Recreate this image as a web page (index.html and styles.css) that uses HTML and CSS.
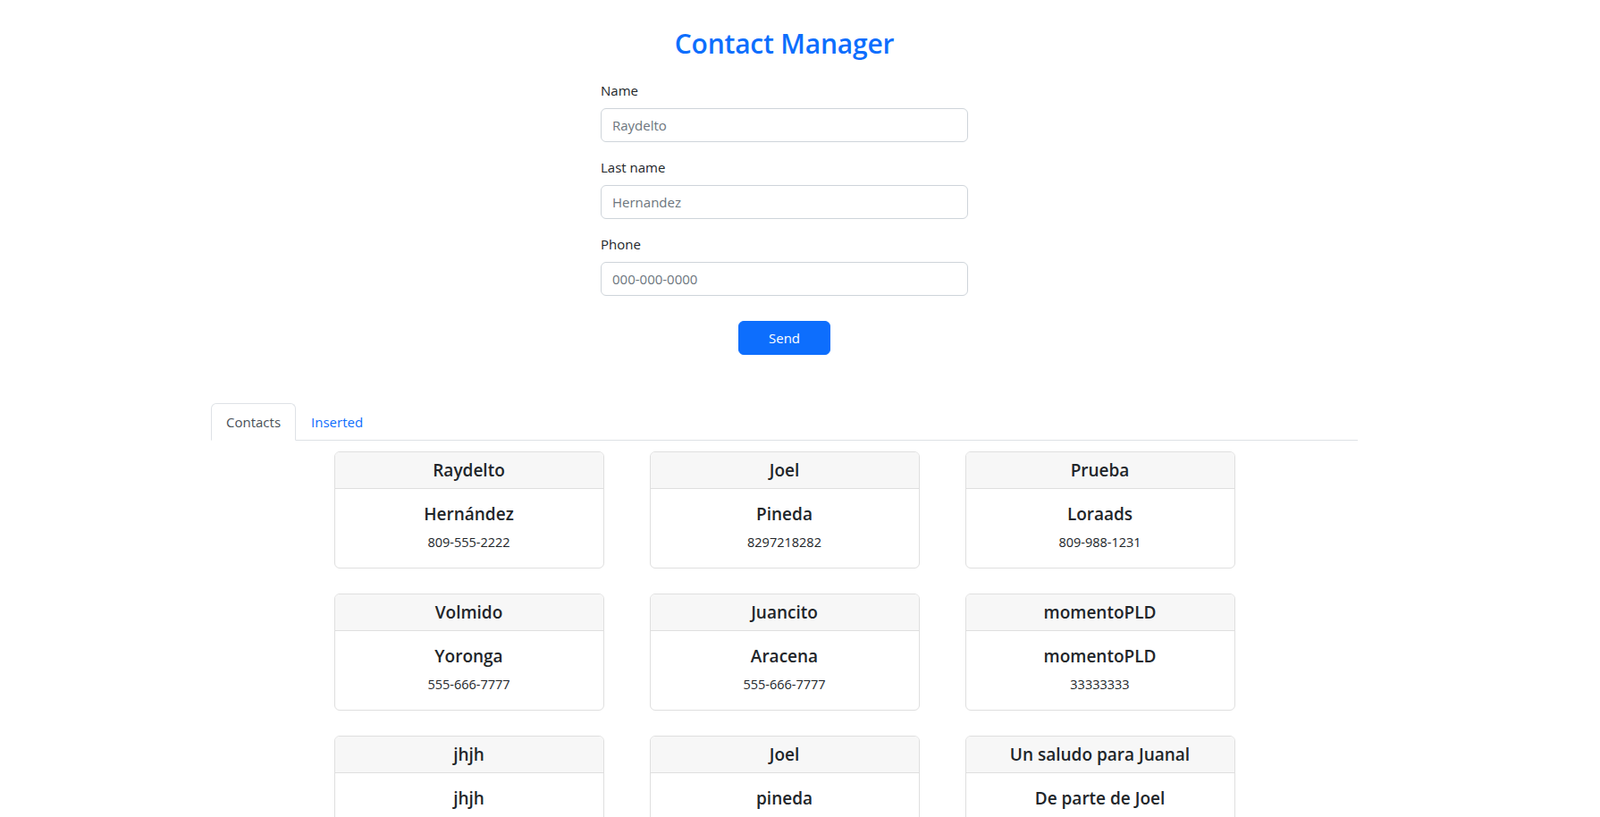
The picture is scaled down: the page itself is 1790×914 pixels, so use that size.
FILE: index.html
```html
<!DOCTYPE html>
<html lang="en">
<head>
<meta charset="utf-8">
<title>Contact Manager</title>
<link rel="stylesheet" href="styles.css">
</head>
<body>
<div class="page">
  <h2 class="title">Contact Manager</h2>
  <form class="form">
    <div class="field">
      <label class="label" for="name">Name</label>
      <input class="input" id="name" type="text" placeholder="Raydelto">
    </div>
    <div class="field">
      <label class="label" for="last">Last name</label>
      <input class="input" id="last" type="text" placeholder="Hernandez">
    </div>
    <div class="field">
      <label class="label" for="phone">Phone</label>
      <input class="input" id="phone" type="text" placeholder="000-000-0000">
    </div>
    <div class="actions">
      <button class="btn" type="button">Send</button>
    </div>
  </form>

  <div class="tabs-wrap">
    <ul class="tabs">
      <li><a class="tab active">Contacts</a></li>
      <li><a class="tab">Inserted</a></li>
    </ul>
  </div>

  <div class="cards">
    <div class="card"><div class="card-header">Raydelto</div><div class="card-body"><div class="last">Hernández</div><div class="phone">809-555-2222</div></div></div>
    <div class="card"><div class="card-header">Joel</div><div class="card-body"><div class="last">Pineda</div><div class="phone">8297218282</div></div></div>
    <div class="card"><div class="card-header">Prueba</div><div class="card-body"><div class="last">Loraads</div><div class="phone">809-988-1231</div></div></div>
    <div class="card"><div class="card-header">Volmido</div><div class="card-body"><div class="last">Yoronga</div><div class="phone">555-666-7777</div></div></div>
    <div class="card"><div class="card-header">Juancito</div><div class="card-body"><div class="last">Aracena</div><div class="phone">555-666-7777</div></div></div>
    <div class="card"><div class="card-header">momentoPLD</div><div class="card-body"><div class="last">momentoPLD</div><div class="phone">33333333</div></div></div>
    <div class="card"><div class="card-header">jhjh</div><div class="card-body"><div class="last">jhjh</div><div class="phone">jhjh</div></div></div>
    <div class="card"><div class="card-header">Joel</div><div class="card-body"><div class="last">pineda</div><div class="phone">8098888888</div></div></div>
    <div class="card"><div class="card-header">Un saludo para Juanal</div><div class="card-body"><div class="last">De parte de Joel</div><div class="phone">809-000-0000</div></div></div>
  </div>
</div>
</body>
</html>
```

FILE: styles.css
```css
* { box-sizing: border-box; }
html, body { margin: 0; padding: 0; background: #fff; }
body {
  font-family: "Open Sans", "Noto Sans", "Liberation Sans", sans-serif;
  font-size: 16px;
  line-height: 1.5;
  color: #212529;
  overflow: hidden;
}
.page {
  width: 1755px;
  padding-top: 31px;
}
.title {
  margin: 0 0 8px;
  text-align: center;
  color: #0d6efd;
  font-size: 30px;
  font-weight: 600;
  line-height: 1.2;
  letter-spacing: -0.2px;
}
.form {
  width: 411px;
  margin: 22px auto 0;
}
.field { margin-bottom: 16px; }
.label {
  display: block;
  margin-bottom: 8px;
  font-size: 15px;
  line-height: 24px;
}
.input {
  display: block;
  width: 100%;
  height: 38px;
  padding: 6px 12px;
  font-family: inherit;
  font-size: 15px;
  color: #212529;
  border: 1px solid #ced4da;
  border-radius: 6px;
  outline: none;
}
.input::placeholder { color: #6c757d; }
.actions {
  display: flex;
  justify-content: center;
  padding-top: 12px;
}
.btn {
  width: 103px;
  height: 38px;
  font-family: inherit;
  font-size: 15px;
  color: #fff;
  background: #0d6efd;
  border: 1px solid #0d6efd;
  border-radius: 6px;
}
.tabs-wrap {
  width: 1283px;
  margin: 54px auto 0;
}
.tabs {
  display: flex;
  list-style: none;
  margin: 0;
  padding: 0;
  border-bottom: 1px solid #dee2e6;
}
.tab {
  display: block;
  margin-bottom: -1px;
  padding: 8px 16px;
  font-size: 15px;
  line-height: 24px;
  color: #0d6efd;
  border: 1px solid transparent;
  border-top-left-radius: 6px;
  border-top-right-radius: 6px;
}
.tab.active {
  color: #495057;
  background: #fff;
  border-color: #dee2e6 #dee2e6 #fff;
}
.cards {
  display: grid;
  grid-template-columns: repeat(3, 302px);
  column-gap: 51px;
  row-gap: 28px;
  width: 1008px;
  margin: 12px auto 0;
}
.card {
  border: 1px solid #dfdfdf;
  border-radius: 6px;
  overflow: hidden;
  text-align: center;
}
.card-header {
  padding: 8px 16px;
  background: #f7f7f7;
  border-bottom: 1px solid #dfdfdf;
  font-size: 19px;
  font-weight: 600;
  line-height: 24px;
}
.card-body {
  padding: 16px;
}
.last {
  margin-bottom: 8px;
  font-size: 19px;
  font-weight: 600;
  line-height: 24px;
}
.phone {
  font-size: 14.5px;
  line-height: 24px;
}
```
